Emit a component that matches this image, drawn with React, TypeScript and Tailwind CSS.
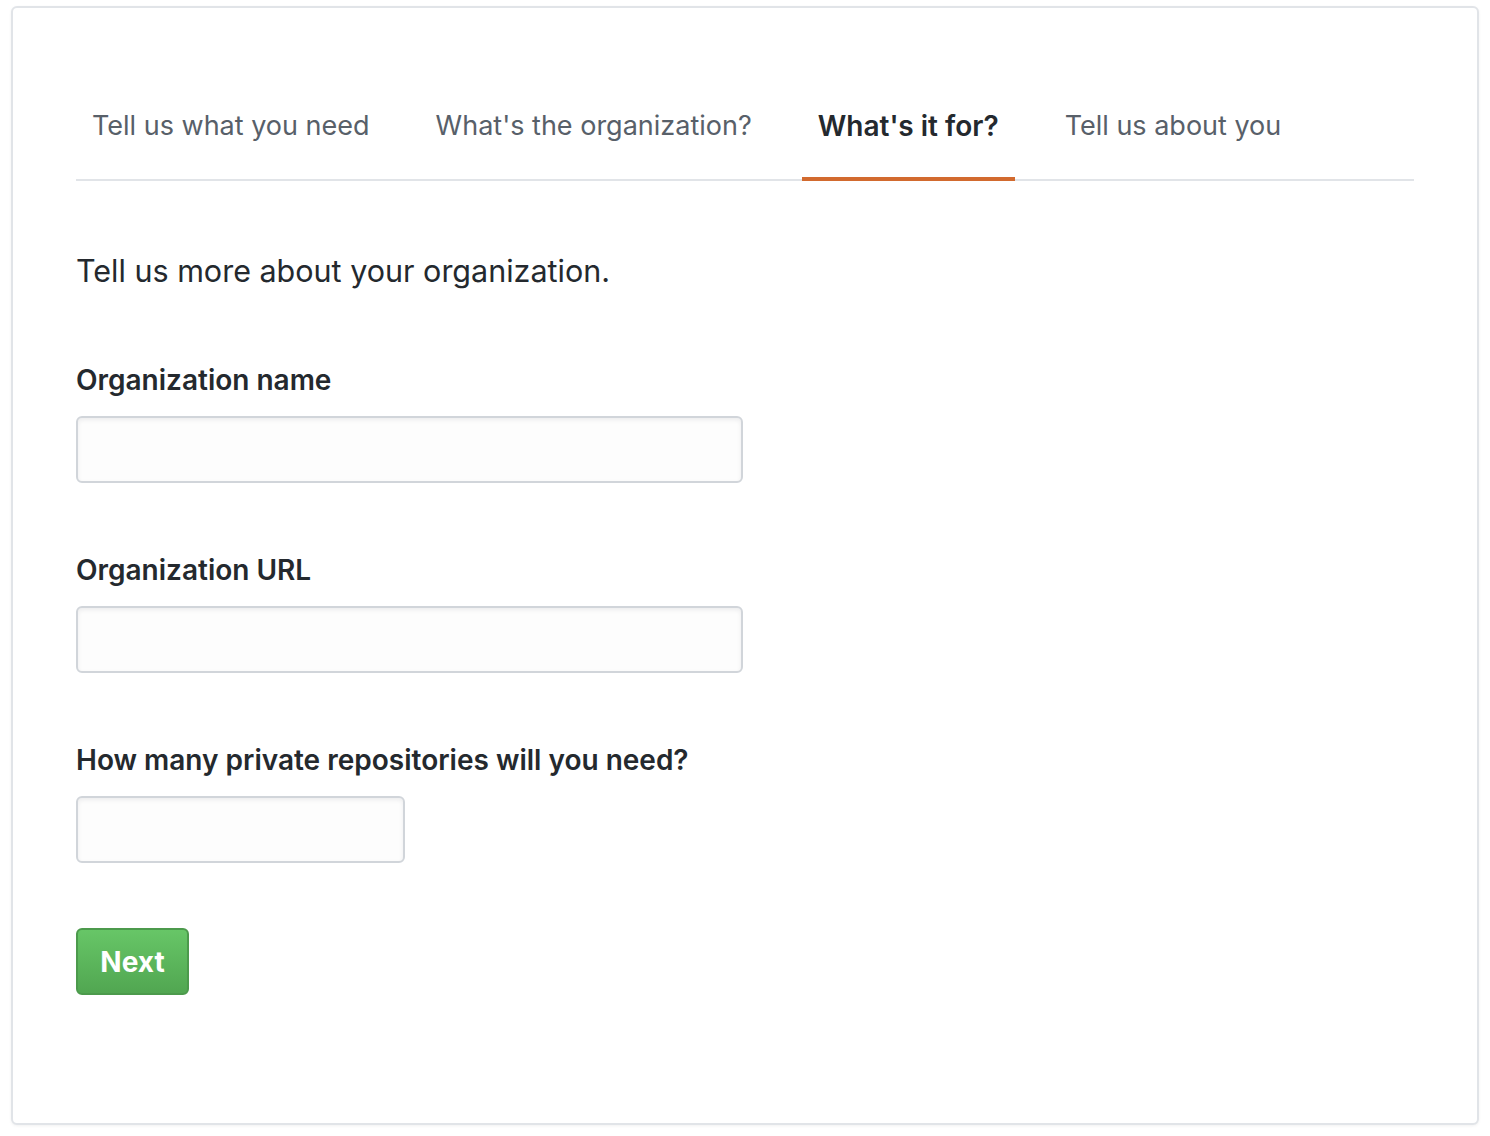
import React from "react";

const tabs = [
  { label: "Tell us what you need", active: false },
  { label: "What's the organization?", active: false },
  { label: "What's it for?", active: true },
  { label: "Tell us about you", active: false },
];

function Field({ label, narrow }: { label: string; narrow?: boolean }) {
  return (
    <div className="flex flex-col">
      <label className="text-[28px] leading-[40px] font-semibold text-[#24292e]">{label}</label>
      <input
        type="text"
        className={`mt-[16px] h-[67px] ${narrow ? "w-[329px]" : "w-[667px]"} rounded-[6px] border-2 border-[#d1d5da] bg-[#fdfdfd] shadow-[inset_0_2px_4px_rgba(27,31,35,0.075)] outline-none`}
      />
    </div>
  );
}

export default function App() {
  return (
    <div
      className="min-h-[1136px] bg-white pt-[6px] pl-[11px] pr-[11px]"
      style={{ fontFamily: 'Inter, "Liberation Sans", Arial, sans-serif' }}
    >
      <div className="h-[1119px] rounded-[6px] border-2 border-[#e1e4e8] bg-white shadow-[0_1px_3px_rgba(0,0,0,0.06)] px-[63px] pt-[98px]">
        <nav className="flex items-end gap-[34px] border-b-2 border-[#e1e4e8]">
          {tabs.map((t) => (
            <div
              key={t.label}
              className={`-mb-[2px] px-[16px] pb-[31px] leading-[40px] border-b-4 ${
                t.active
                  ? "text-[28px] border-[#d26a2e] font-semibold text-[#24292e]"
                  : "text-[27px] border-transparent text-[#586069]"
              }`}
            >
              {t.label}
            </div>
          ))}
        </nav>
        <h2 className="mt-[70px] text-[30.5px] leading-[40px] font-normal text-[#24292e]">
          Tell us more about your organization.
        </h2>
        <div className="mt-[69px] flex flex-col gap-[67px]">
          <Field label="Organization name" />
          <Field label="Organization URL" />
          <Field label="How many private repositories will you need?" narrow />
        </div>
        <button
          type="button"
          className="mt-[65px] h-[67px] w-[113px] rounded-[6px] border-2 border-[#4c9a4c] bg-gradient-to-b from-[#67c667] to-[#51a651] text-[28px] font-bold text-white"
        >
          Next
        </button>
      </div>
    </div>
  );
}
